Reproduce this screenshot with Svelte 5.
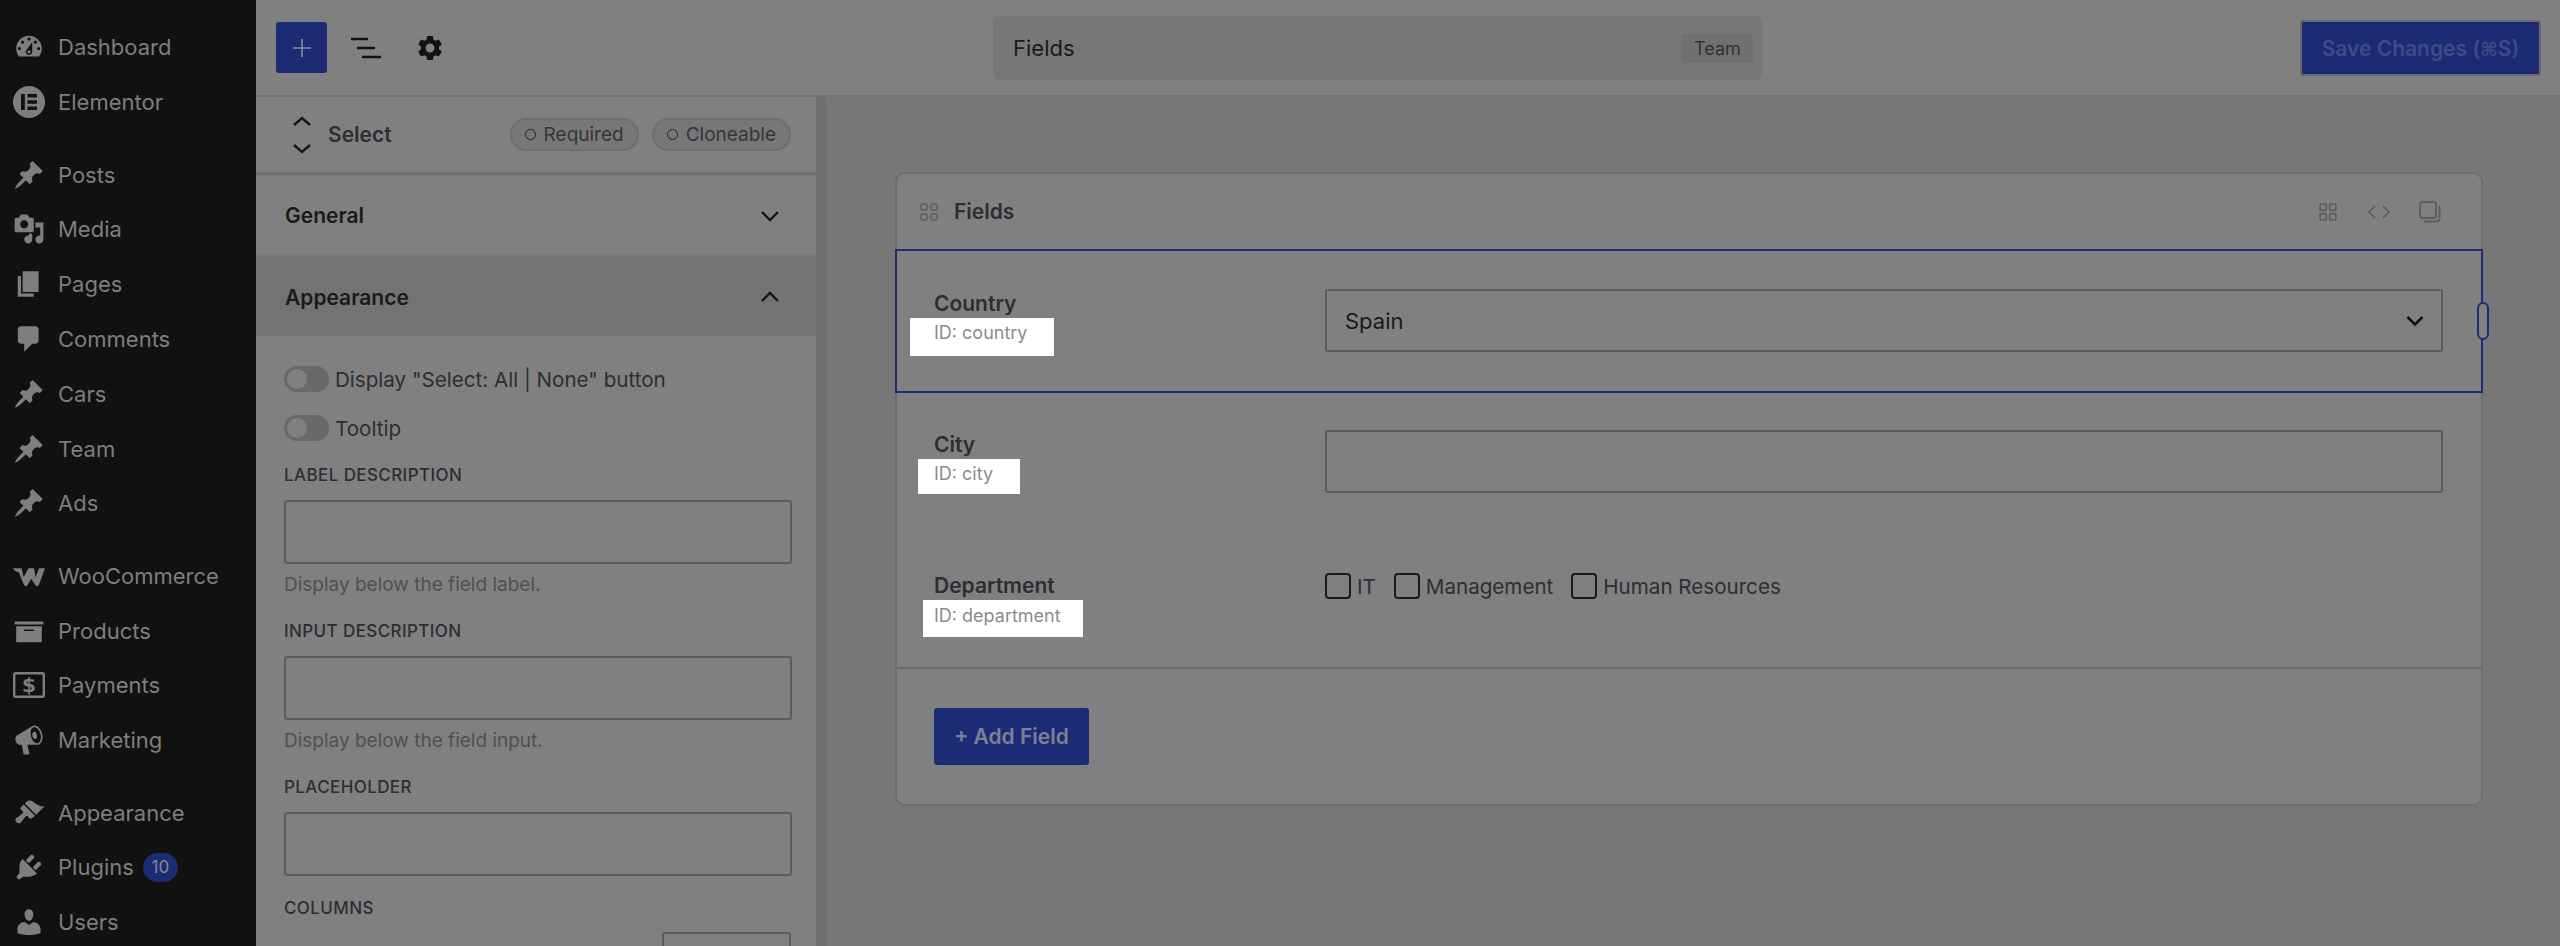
<script>
  const pin = "M10.44 3.02l1.82-1.82 6.36 6.35-1.83 1.82c-1.05-.68-2.48-.57-3.41.36l-.75.75c-.92.93-1.04 2.35-.35 3.41l-1.83 1.82-2.41-2.41-2.8 2.79c-.42.42-3.38 2.71-3.8 2.29s1.86-3.39 2.28-3.81l2.79-2.79L4.1 9.36l1.83-1.82c1.05.69 2.48.57 3.4-.36l.75-.75c.93-.92 1.05-2.35.36-3.41z";
  const icons = {
    dashboard: "M3.76 16h12.48c1.1-1.37 1.76-3.11 1.76-5 0-4.42-3.58-8-8-8s-8 3.58-8 8c0 1.89.66 3.63 1.76 5zM10 4c.55 0 1 .45 1 1s-.45 1-1 1-1-.45-1-1 .45-1 1-1zM6 6c.55 0 1 .45 1 1s-.45 1-1 1-1-.45-1-1 .45-1 1-1zm8 0c.55 0 1 .45 1 1s-.45 1-1 1-1-.45-1-1 .45-1 1-1zm-5.37 5.55L12 7v6c0 1.1-.9 2-2 2s-2-.9-2-2c0-.57.24-1.08.63-1.45zM4 10c.55 0 1 .45 1 1s-.45 1-1 1-1-.45-1-1 .45-1 1-1zm12 0c.55 0 1 .45 1 1s-.45 1-1 1-1-.45-1-1 .45-1 1-1zm-5 3c0-.55-.45-1-1-1s-1 .45-1 1 .45 1 1 1 1-.45 1-1z",
    elementor: "M10 0a10 10 0 1 0 0 20a10 10 0 0 0 0-20zM5 5h2.4v10H5zM9 5h6v2.2H9zM9 8.9h6v2.2H9zM9 12.8h6V15H9z",
    pin,
    media: "M13 11V4c0-.55-.45-1-1-1h-1.67L9 1H5L3.67 3H2c-.55 0-1 .45-1 1v7c0 .55.45 1 1 1h10c.55 0 1-.45 1-1zM7 4.5c1.38 0 2.5 1.12 2.5 2.5S8.38 9.5 7 9.5 4.5 8.38 4.5 7 5.62 4.5 7 4.5zM14 6h5v10.5c0 1.38-1.12 2.5-2.5 2.5S14 17.88 14 16.5s1.12-2.5 2.5-2.5c.17 0 .34.02.5.05V9h-3V6zm-4 8.05V13h2v3.5c0 1.38-1.12 2.5-2.5 2.5S7 17.88 7 16.5 8.12 14 9.5 14c.17 0 .34.02.5.05z",
    page: "M6 15V2h10v13H6zm-1 1h8v2H3V5h2v11z",
    comments: "M5 2h9c1.1 0 2 .9 2 2v7c0 1.1-.9 2-2 2h-2l-5 5v-5H5c-1.1 0-2-.9-2-2V4c0-1.1.9-2 2-2z",
    woo: "M0 5.2h5.4l1.3 5.6 2.9-5.6h3.6l.9 5.6 2.2-5.6H20l-3.8 10.2c-.4 1.1-1.7 1.2-2.4.1l-2.4-3.8-2.2 3.8c-.6 1.1-2 1-2.4-.1L3.6 7.6C2 7.5.6 6.7 0 5.2z",
    products: "M19 4v2H1V4h18zM2 7h16v10H2V7zm11 3V9H7v1h6z",
    marketing: "M18.15 5.94c.46 1.62.38 3.22-.02 4.48-.42 1.28-1.26 2.18-2.3 2.48-.16.06-.26.06-.4.06-.06.02-.12.02-.18.02-.06.02-.14.02-.22.02H9l1.2 5.5c.02.14-.06.26-.14.34-.08.1-.24.16-.34.16H6.95c-.1 0-.26-.06-.34-.16-.08-.08-.16-.2-.14-.34l-1-5.5H4.25l-.02-.02c-.5.06-1.08-.18-1.54-.62s-.88-1.08-1.06-1.88c-.24-.8-.2-1.56-.02-2.2.18-.62.58-1.08 1.06-1.3l.02-.02 9-5.4c.1-.06.18-.1.24-.16.06-.04.14-.08.24-.12.16-.08.28-.12.5-.18 1.04-.3 2.24.1 3.22.98s1.84 2.24 2.26 3.86zm-2.58 5.98h-.02c.4-.1.74-.34 1.04-.7.58-.7.86-1.76.86-3.04-.02-.64-.1-1.3-.28-1.98-.34-1.36-1.02-2.5-1.78-3.24s-1.68-1.1-2.46-.88c-.82.22-1.4.96-1.7 2-.32 1.04-.28 2.36.06 3.72.38 1.36 1 2.5 1.8 3.24.78.74 1.62 1.1 2.48.88zm-2.54-7.08c.22-.04.42-.02.62.04.38.16.76.48 1.02 1s.42 1.2.42 1.78c0 .3-.04.56-.12.8-.18.48-.44.84-.86.94-.34.1-.8-.06-1.14-.4-.36-.34-.66-.84-.82-1.4-.34-1.14-.02-2.34.88-2.76z",
    appearance: "M14.48 11.06L7.41 3.99l1.5-1.5c.5-.56 2.3-.47 3.51.32 1.21.8 1.43 1.28 2.91 2.1 1.18.64 2.45 1.26 4.45.85zm-.71.71L6.7 4.7 4.93 6.47c-.39.39-.39 1.02 0 1.41l1.06 1.06c.39.39.39 1.03 0 1.42-.6.6-1.43 1.11-2.21 1.69-.35.26-.7.53-1.01.84C1.43 13.23 1 14.1 1.96 15.5c1 1.5 2.43.9 3.36-.1.31-.31.58-.66.84-1.01.58-.78 1.09-1.61 1.69-2.21.39-.39 1.02-.39 1.41 0l1.06 1.06c.39.39 1.02.39 1.41 0z",
    plugins: "M13.11 4.36L9.87 7.6 8 5.73l3.24-3.24c.35-.34 1.05-.2 1.56.32.52.51.66 1.21.31 1.55zm-8 1.77l.91-1.12 9.01 9.01-1.19.84c-.71.71-2.63 1.16-3.82 1.16H6.14L4.9 17.26c-.59.59-1.54.59-2.12 0-.59-.58-.59-1.53 0-2.12l1.24-1.24v-3.88c0-1.13.4-3.19 1.09-3.89zm7.26 3.97l3.24-3.24c.34-.35 1.04-.21 1.55.31.52.51.66 1.21.31 1.55l-3.24 3.25z",
    users: "M10 9.25c-2.27 0-2.73-3.44-2.73-3.44C7 4.02 7.82 2 9.97 2c2.16 0 2.98 2.02 2.71 3.81 0 0-.41 3.44-2.68 3.44zm0 2.57L12.72 10c2.39 0 4.52 2.33 4.52 4.53v2.49s-3.65 1.13-7.24 1.13c-3.65 0-7.24-1.13-7.24-1.13v-2.49c0-2.25 1.94-4.48 4.47-4.48z"
  };
  const groups = [
    [["Dashboard", "dashboard"], ["Elementor", "elementor"]],
    [["Posts", "pin"], ["Media", "media"], ["Pages", "page"], ["Comments", "comments"], ["Cars", "pin"], ["Team", "pin"], ["Ads", "pin"]],
    [["WooCommerce", "woo"], ["Products", "products"], ["Payments", "pay"], ["Marketing", "marketing"]],
    [["Appearance", "appearance"], ["Plugins", "plugins", "10"], ["Users", "users"]]
  ];
  const options = ["IT", "Management", "Human Resources"];
  const descFields = [
    ["LABEL DESCRIPTION", "Display below the field label."],
    ["INPUT DESCRIPTION", "Display below the field input."],
    ["PLACEHOLDER", ""]
  ];
</script>

<div class="page">
  <nav class="sidebar">
    {#each groups as group}
      <ul class="group">
        {#each group as [label, icon, badge]}
          <li class="item">
            <span class="ico">
              {#if icon === "pay"}
                <svg viewBox="0 0 32 26" width="32" height="26"><rect x="1.2" y="1.2" width="29.6" height="23.6" rx="1.5" fill="none" stroke="#7e7e7e" stroke-width="2.4"/><text x="16" y="20" text-anchor="middle" class="dollar">$</text></svg>
              {:else}
                <svg viewBox="0 0 20 20" width="32" height="32"><path d={icons[icon]} fill="#7e7e7e" fill-rule="evenodd"/></svg>
              {/if}
            </span>
            <span>{label}</span>
            {#if badge}<span class="badge">{badge}</span>{/if}
          </li>
        {/each}
      </ul>
    {/each}
  </nav>

  <div class="right">
    <header class="topbar">
      <div class="tools">
        <button class="plus" aria-label="Add">
          <svg viewBox="0 0 20 20" width="20" height="20"><path d="M10 1v18M1 10h18" stroke="#8a8a8a" stroke-width="1.6"/></svg>
        </button>
        <svg class="list" viewBox="0 0 30 22" width="30" height="22"><path d="M0 2h17M6 11h18M11 20h19" stroke="#111" stroke-width="2.4" fill="none"/></svg>
        <svg class="gear" viewBox="0 0 24 24" width="30" height="30"><path fill="#111" d="M19.14 12.94c.04-.3.06-.61.06-.94 0-.32-.02-.64-.07-.94l2.03-1.58a.49.49 0 0 0 .12-.61l-1.92-3.32a.488.488 0 0 0-.59-.22l-2.39.96c-.5-.38-1.03-.7-1.62-.94l-.36-2.54a.484.484 0 0 0-.48-.41h-3.84c-.24 0-.43.17-.47.41l-.36 2.54c-.59.24-1.13.57-1.62.94l-2.39-.96c-.22-.08-.47 0-.59.22L2.74 8.87c-.12.21-.08.47.12.61l2.03 1.58c-.05.3-.09.63-.09.94s.02.64.07.94l-2.03 1.58a.49.49 0 0 0-.12.61l1.92 3.32c.12.22.37.29.59.22l2.39-.96c.5.38 1.03.7 1.62.94l.36 2.54c.05.24.24.41.48.41h3.84c.24 0 .44-.17.47-.41l.36-2.54c.59-.24 1.13-.56 1.62-.94l2.39.96c.22.08.47 0 .59-.22l1.92-3.32c.12-.22.07-.47-.12-.61l-2.01-1.58zM12 15.6c-1.98 0-3.6-1.62-3.6-3.6s1.62-3.6 3.6-3.6 3.6 1.62 3.6 3.6-1.62 3.6-3.6 3.6z"/></svg>
      </div>
      <div class="title">
        <span>Fields</span>
        <span class="chip">Team</span>
      </div>
      <button class="save">Save Changes (<span class="cmd">⌘</span>S)</button>
    </header>

    <div class="body">
      <aside class="panel">
        <div class="panel-inner">
          <div class="select-head">
            <svg viewBox="0 0 18 38" width="18" height="38"><path d="M1 9l8-7 8 7M1 29l8 7 8-7" fill="none" stroke="#161616" stroke-width="2.4"/></svg>
            <span class="select-name">Select</span>
            <span class="pills">
              <span class="pill"><i></i>Required</span>
              <span class="pill"><i></i>Cloneable</span>
            </span>
          </div>
          <div class="acc">
            <span>General</span>
            <svg viewBox="0 0 18 12" width="18" height="12"><path d="M1 2l8 8 8-8" fill="none" stroke="#161616" stroke-width="2.4"/></svg>
          </div>
          <div class="acc open">
            <span>Appearance</span>
            <svg viewBox="0 0 18 12" width="18" height="12"><path d="M1 10l8-8 8 8" fill="none" stroke="#161616" stroke-width="2.4"/></svg>
          </div>
          <div class="settings">
            <div class="toggle"><span class="switch"><b></b></span>Display "Select: All | None" button</div>
            <div class="toggle"><span class="switch"><b></b></span>Tooltip</div>
            {#each descFields as [label, help]}
              <div class="field">
                <div class="cap">{label}</div>
                <div class="box"></div>
                {#if help}<div class="help">{help}</div>{/if}
              </div>
            {/each}
            <div class="cap columns">COLUMNS</div>
            <div class="box small"></div>
          </div>
        </div>
        <div class="scrollbar"></div>
      </aside>

      <main class="main">
        <section class="card">
          <div class="card-head">
            <svg viewBox="0 0 18 18" width="18" height="18"><g fill="none" stroke="#5c5c5c" stroke-width="1.4"><rect x="1" y="1" width="6" height="6" rx="1.5"/><rect x="11" y="1" width="6" height="6" rx="1.5"/><rect x="1" y="11" width="6" height="6" rx="1.5"/><rect x="11" y="11" width="6" height="6" rx="1.5"/></g></svg>
            <span class="card-title">Fields</span>
            <span class="card-tools">
              <svg viewBox="0 0 18 18" width="18" height="18"><g fill="none" stroke="#5c5c5c" stroke-width="1.6"><rect x="1" y="1" width="6.4" height="6.4" rx="1.6"/><rect x="10.6" y="1" width="6.4" height="6.4" rx="1.6"/><rect x="1" y="10.6" width="6.4" height="6.4" rx="1.6"/><rect x="10.6" y="10.6" width="6.4" height="6.4" rx="1.6"/></g></svg>
              <svg class="code" viewBox="0 0 22 16" width="22" height="16"><path d="M7 2L1 8l6 6M15 2l6 6-6 6" fill="none" stroke="#5c5c5c" stroke-width="1.6"/></svg>
              <svg viewBox="0 0 22 22" width="22" height="22"><rect x="1" y="1" width="16" height="16" rx="2.5" fill="none" stroke="#5c5c5c" stroke-width="1.8"/><path d="M20.5 5v13a2.5 2.5 0 0 1-2.5 2.5H5" fill="none" stroke="#5c5c5c" stroke-width="1.8"/></svg>
            </span>
          </div>

          <div class="row selected">
            <div class="lab">
              <div class="name">Country</div>
              <div class="id id-country">ID: country</div>
            </div>
            <div class="control">
              <div class="input select">Spain
                <svg viewBox="0 0 18 12" width="18" height="12"><path d="M1.5 2l7.5 7.5L16.5 2" fill="none" stroke="#111" stroke-width="2.6"/></svg>
              </div>
            </div>
            <span class="handle"></span>
          </div>

          <div class="row city">
            <div class="lab">
              <div class="name">City</div>
              <div class="id id-city">ID: city</div>
            </div>
            <div class="control"><div class="input"></div></div>
          </div>

          <div class="row dept">
            <div class="lab">
              <div class="name">Department</div>
              <div class="id id-dept">ID: department</div>
            </div>
            <div class="control checks">
              {#each options as o}
                <span class="check"><span class="tick"></span>{o}</span>
              {/each}
            </div>
          </div>

          <div class="card-foot">
            <button class="add">+ Add Field</button>
          </div>
        </section>
      </main>
    </div>
  </div>
</div>

<style>
  :global(body) { margin: 0; background: #777; }
  * { box-sizing: border-box; }
  .page { display: flex; width: 2560px; height: 946px; overflow: hidden; font-family: Inter, "Liberation Sans", sans-serif; color: #2c2e33; background: #777; }
  .sidebar { width: 256px; flex: none; background: #111; padding-top: 20px; }
  .group { list-style: none; margin: 0 0 17.6px; padding: 0; }
  .item { display: flex; align-items: center; height: 54.8px; font-size: 22px; color: #7e7e7e; }
  .ico { width: 58px; flex: none; display: flex; justify-content: center; }
  .dollar { font: bold 20px "DejaVu Sans", sans-serif; fill: #7e7e7e; }
  .badge { margin-left: 9px; width: 35px; height: 29px; border-radius: 15px; background: #1c2c74; color: #85889a; font-size: 17px; display: flex; align-items: center; justify-content: center; }

  .right { flex: 1; display: flex; flex-direction: column; min-width: 0; }
  .topbar { height: 97px; flex: none; display: flex; align-items: center; background: #808080; border-bottom: 2px solid #737373; border-left: 1px solid #808080; }
  .tools { width: 736px; display: flex; align-items: center; padding-left: 19px; }
  .plus { width: 51px; height: 51px; border: 0; border-radius: 3px; background: #1c2c74; display: flex; align-items: center; justify-content: center; padding: 0; }
  .list { margin-left: 24px; }
  .gear { margin-left: 34px; }
  .title { width: 769px; height: 64px; background: #777; border-radius: 6px; display: flex; align-items: center; justify-content: space-between; padding: 1px 9px 0 20px; font-size: 22px; color: #1a1a1a; }
  .chip { width: 71px; height: 29px; background: #707070; border-radius: 3px; font-size: 18px; color: #2f3136; display: flex; align-items: center; justify-content: center; }
  .save { margin-left: auto; margin-right: 19px; width: 241px; height: 56px; background: #1c2c74; border: 2px solid #6a6a6a; border-radius: 3px; color: #3d4b86; font: 600 21px Inter, sans-serif; padding: 1px 0 0; }
  .cmd { font-family: "DejaVu Sans", sans-serif; font-size: 19px; }

  .body { flex: 1; display: flex; min-height: 0; }
  .panel { width: 570px; flex: none; display: flex; background: #808080; overflow: hidden; }
  .panel-inner { flex: 1; min-width: 0; }
  .scrollbar { width: 10px; background: #6f6f6f; }
  .select-head { height: 78px; display: flex; align-items: center; padding: 0 25px 0 37px; border-bottom: 3px solid #707070; }
  .select-name { margin-left: 17px; font-size: 21px; font-weight: 600; color: #2c2e33; }
  .pills { margin-left: auto; display: flex; gap: 13px; }
  .pill { height: 33px; border: 2px solid #6e6e6e; border-radius: 17px; background: #777; display: flex; align-items: center; padding: 0 13px; font-size: 19px; color: #33363b; }
  .pill i { width: 11px; height: 11px; border: 1.5px solid #222; border-radius: 50%; margin-right: 8px; }
  .acc { height: 81px; padding: 2px 37px 0 29px; display: flex; align-items: center; justify-content: space-between; font-size: 21px; font-weight: 600; color: #1a1a1a; border-bottom: 2px solid #787878; }
  .acc.open { height: 80px; background: #737373; border-bottom: 0; }
  .settings { padding: 30px 24px 0 28px; }
  .toggle { display: flex; align-items: center; height: 26px; margin-bottom: 23px; font-size: 20.6px; color: #2c2e33; }
  .switch { width: 45px; height: 26px; border-radius: 13px; background: #696969; margin-right: 6px; padding: 3px; display: flex; }
  .switch b { width: 20px; height: 20px; border-radius: 50%; background: #808080; }
  .field { height: 156px; }
  .toggle + .field { margin-top: -1px; }
  .cap { height: 24px; line-height: 24px; font-size: 17px; font-weight: 500; letter-spacing: 0.4px; color: #2c2e33; margin-bottom: 13px; }
  .box { width: 508px; height: 64px; border: 2px solid #5c5c5c; border-radius: 3px; }
  .help { margin-top: 9px; line-height: 24px; font-size: 19px; color: #505050; }
  .columns { margin-top: -35px; margin-bottom: 12px; }
  .box.small { width: 129px; margin-left: 378px; }

  .main { flex: 1; min-width: 0; padding: 75px 77px 0 69px; }
  .card { height: 634px; border: 2px solid #6e6e6e; border-radius: 10px; background: #808080; }
  .card-head { height: 75px; display: flex; align-items: center; padding: 0 40px 0 23px; }
  .card-title { margin-left: 16px; font-size: 21px; font-weight: 600; color: #2c2e33; }
  .card-tools { margin-left: auto; display: flex; align-items: center; gap: 30px; }
  .code { margin-left: 1px; margin-right: -1px; }
  .row { display: flex; padding-left: 37px; position: relative; }
  .selected { height: 144px; margin: 0 -2px; border: 2px solid #1d2c78; padding: 38px 38px 0 37px; }
  .city { height: 141px; padding-top: 37px; }
  .dept { height: 135px; padding-top: 37px; border-bottom: 2px solid #6e6e6e; }
  .lab { width: 391px; flex: none; padding-top: 1px; }
  .name { font-size: 21px; font-weight: 600; line-height: 28px; color: #2c2e33; }
  .id { width: fit-content; background: #fff; color: #8b8b8b; font-size: 18px; line-height: 24px; }
  .id-country { margin-left: -24px; padding: 3px 26px 11px 24px; }
  .id-city { margin-left: -16px; padding: 3px 27px 8px 16px; }
  .id-dept { margin-left: -11px; padding: 4px 22px 9px 11px; }
  .control { flex: 1; padding-right: 38px; }
  .selected .control { padding-right: 0; }
  .input { height: 63px; border: 2px solid #5c5c5c; border-radius: 3px; }
  .select { display: flex; align-items: center; justify-content: space-between; padding: 0 17px 0 18px; font-size: 22px; color: #1a1a1a; }
  .handle { position: absolute; right: -8px; top: 51px; width: 12px; height: 38px; border: 2px solid #1d2c78; border-radius: 6px; background: #808080; }
  .checks { display: flex; gap: 18px; padding-top: 2px; }
  .check { display: flex; align-items: center; height: 26px; font-size: 20.6px; color: #2c2e33; }
  .tick { width: 26px; height: 26px; border: 2px solid #1a1a1a; border-radius: 4px; margin-right: 6px; }
  .card-foot { padding: 39px 0 0 37px; }
  .add { width: 155px; height: 57px; border: 0; border-radius: 3px; background: #1c2c74; color: #7c8094; font: 600 21px Inter, sans-serif; padding: 0; }
</style>
